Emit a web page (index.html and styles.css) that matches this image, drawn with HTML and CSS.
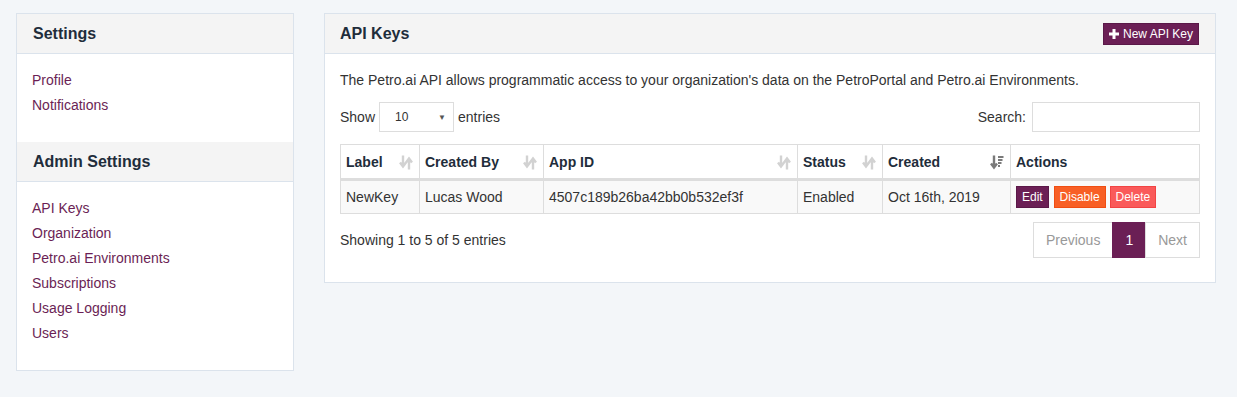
FILE: index.html
```html
<!DOCTYPE html>
<html lang="en">
<head>
    <meta charset="UTF-8">
    <title>API Keys</title>
    <link rel="stylesheet" href="styles.css">
</head>
<body>
    <div class="page">
        <div class="panel side">
            <div class="panel-heading">Settings</div>
            <ul class="nav">
                <li><a href="#">Profile</a></li>
                <li><a href="#">Notifications</a></li>
            </ul>
            <div class="panel-heading">Admin Settings</div>
            <ul class="nav">
                <li><a href="#">API Keys</a></li>
                <li><a href="#">Organization</a></li>
                <li><a href="#">Petro.ai Environments</a></li>
                <li><a href="#">Subscriptions</a></li>
                <li><a href="#">Usage Logging</a></li>
                <li><a href="#">Users</a></li>
            </ul>
        </div>

        <div class="panel main">
            <div class="panel-heading split">
                <span>API Keys</span>
                <button class="btn btn-purple">
                    <svg width="10" height="10" viewBox="0 0 10 10"><path d="M3.5 0h3v3.5H10v3H6.5V10h-3V6.5H0v-3h3.5z" fill="#fff"/></svg>
                    New API Key
                </button>
            </div>
            <div class="panel-body">
                <p class="intro">The Petro.ai API allows programmatic access to your organization's data on the PetroPortal and Petro.ai Environments.</p>

                <div class="controls">
                    <label>Show
                        <span class="select">10<span class="caret">&#9660;</span></span>
                        entries</label>
                    <label>Search: <input type="text" class="search"></label>
                </div>

                <table class="grid">
                    <thead>
                        <tr>
                            <th class="c-label">Label <svg class="sort" viewBox="0 0 14 14"><path d="M4 0v10M1 7l3 4 3-4M10 14V4M7 7l3-4 3 4" stroke="#d2d2d2" stroke-width="2.4" fill="none"/></svg></th>
                            <th class="c-by">Created By <svg class="sort" viewBox="0 0 14 14"><path d="M4 0v10M1 7l3 4 3-4M10 14V4M7 7l3-4 3 4" stroke="#d2d2d2" stroke-width="2.4" fill="none"/></svg></th>
                            <th class="c-id">App ID <svg class="sort" viewBox="0 0 14 14"><path d="M4 0v10M1 7l3 4 3-4M10 14V4M7 7l3-4 3 4" stroke="#d2d2d2" stroke-width="2.4" fill="none"/></svg></th>
                            <th class="c-status">Status <svg class="sort" viewBox="0 0 14 14"><path d="M4 0v10M1 7l3 4 3-4M10 14V4M7 7l3-4 3 4" stroke="#d2d2d2" stroke-width="2.4" fill="none"/></svg></th>
                            <th class="c-created">Created <svg class="sort" viewBox="0 0 14 14"><path d="M4 0v11M1 8l3 4 3-4" stroke="#7a7a7a" stroke-width="2.4" fill="none"/><path d="M8 1.5h5.5M8 4.5h4.5M8 7.5h3.5M8 10.5h2" stroke="#7a7a7a" stroke-width="1.8"/></svg></th>
                            <th class="c-actions">Actions</th>
                        </tr>
                    </thead>
                    <tbody>
                        <tr>
                            <td>NewKey</td>
                            <td>Lucas Wood</td>
                            <td>4507c189b26ba42bb0b532ef3f</td>
                            <td>Enabled</td>
                            <td>Oct 16th, 2019</td>
                            <td class="actions">
                                <button class="btn btn-purple">Edit</button>
                                <button class="btn btn-orange">Disable</button>
                                <button class="btn btn-red">Delete</button>
                            </td>
                        </tr>
                    </tbody>
                </table>

                <div class="footer">
                    <span>Showing 1 to 5 of 5 entries</span>
                    <ul class="pager">
                        <li>Previous</li>
                        <li class="active">1</li>
                        <li>Next</li>
                    </ul>
                </div>
            </div>
        </div>
    </div>
</body>
</html>
```

FILE: styles.css
```css
body {
    margin: 0;
    background-color: #f3f6f9;
    font-family: "Liberation Sans", Arial, sans-serif;
    font-size: 14px;
    color: #333;
}
.page {
    display: flex;
    align-items: flex-start;
    gap: 30px;
    padding: 13px 21px 0 16px;
}
.panel {
    background-color: #fff;
    border: 1px solid #dbe3ec;
}
.side {
    width: 276px;
}
.main {
    flex: 1;
}
.panel-heading {
    height: 39px;
    line-height: 39px;
    padding: 0 16px;
    background-color: #f4f4f4;
    border-bottom: 1px solid #dbe3ec;
    font-size: 16px;
    font-weight: bold;
    color: #1f2d3b;
}
.main .panel-heading {
    padding-left: 15px;
}
.split {
    display: flex;
    justify-content: space-between;
    align-items: center;
}
.nav {
    list-style: none;
    margin: 0;
    padding: 14px 15px 24px;
}
.nav li {
    line-height: 25px;
}
.nav a {
    color: #6b1f55;
    text-decoration: none;
}
.panel-body {
    padding: 16px 15px 24px;
}
.intro {
    margin: 0 0 12px;
    line-height: 20px;
}
.controls {
    display: flex;
    justify-content: space-between;
    align-items: center;
    height: 30px;
}
.controls label {
    display: flex;
    align-items: center;
    gap: 4px;
}
.select {
    display: inline-flex;
    justify-content: space-between;
    align-items: center;
    box-sizing: border-box;
    width: 75px;
    height: 30px;
    padding: 0 7px 0 15px;
    border: 1px solid #ddd;
    font-size: 12px;
    color: #333;
}
.caret {
    font-size: 8px;
    color: #555;
}
.search {
    box-sizing: border-box;
    width: 168px;
    height: 30px;
    border: 1px solid #ddd;
    margin: 0 0 0 2px;
}
.grid {
    width: 100%;
    margin-top: 12px;
    border-collapse: collapse;
}
.grid th,
.grid td {
    border: 1px solid #ddd;
    padding: 0 5px;
    text-align: left;
    white-space: nowrap;
}
.grid th {
    height: 33px;
    border-bottom: 3px solid #ddd;
    color: #1f2d3b;
    font-weight: bold;
    position: relative;
}
.grid td {
    height: 32px;
    background-color: #f9f9f9;
}
.sort {
    position: absolute;
    right: 6px;
    top: 10px;
    width: 14px;
    height: 15px;
}
.c-label { width: 68px; }
.c-by { width: 113px; }
.c-id { width: 243px; }
.c-status { width: 74px; }
.c-created { width: 117px; }
.btn {
    font-family: inherit;
    font-size: 12px;
    line-height: 18px;
    padding: 1px 5px;
    border: 1px solid transparent;
    color: #fff;
    cursor: pointer;
}
.btn svg {
    vertical-align: -1px;
    margin-right: 1px;
}
.btn-purple {
    background-color: #6b1f55;
    border-color: #5a1848;
}
.btn-orange {
    background-color: #f85f25;
    border-color: #f04d12;
    margin-left: 1px;
}
.btn-red {
    background-color: #fa5a5a;
    border-color: #f24444;
}
.footer {
    display: flex;
    justify-content: space-between;
    align-items: center;
    margin-top: 8px;
}
.pager {
    display: flex;
    list-style: none;
    margin: 0;
    padding: 0;
}
.pager li {
    padding: 6px 12px;
    line-height: 22px;
    border: 1px solid #ddd;
    color: #999;
}
.pager li + li {
    margin-left: -1px;
}
.pager .active {
    background-color: #6b1f55;
    border-color: #6b1f55;
    color: #fff;
}
```
